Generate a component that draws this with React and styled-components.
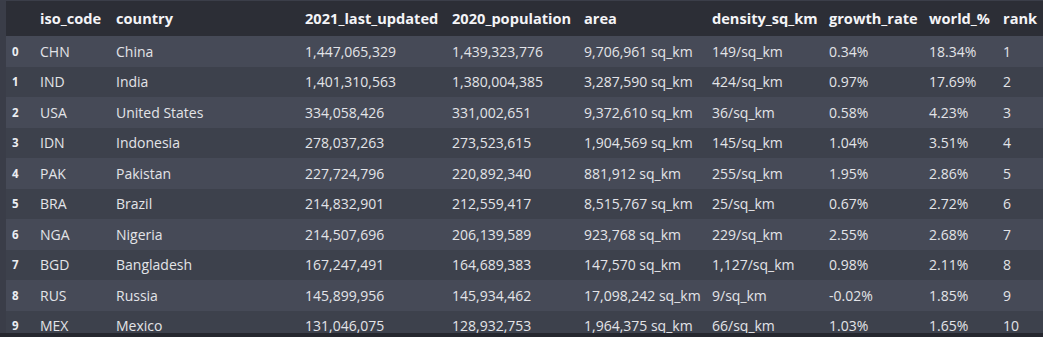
import React from 'react';
import styled, { createGlobalStyle } from 'styled-components';

const GlobalStyle = createGlobalStyle`
    html, body {
        margin: 0;
        padding: 0;
        background: #262830;
    }
    body {
        font-family: "Open Sans", "DejaVu Sans", sans-serif;
    }
`;

const COLUMNS = [
    { key: 'idx', label: '', width: 28 },
    { key: 'iso', label: 'iso_code', width: 76 },
    { key: 'country', label: 'country', width: 189 },
    { key: 'updated', label: '2021_last_updated', width: 147 },
    { key: 'pop', label: '2020_population', width: 132 },
    { key: 'area', label: 'area', width: 128 },
    { key: 'density', label: 'density_sq_km', width: 117 },
    { key: 'growth', label: 'growth_rate', width: 100 },
    { key: 'world', label: 'world_%', width: 74 },
    { key: 'rank', label: 'rank', width: 46 },
];

const ROWS = [
    ['CHN', 'China', '1,447,065,329', '1,439,323,776', '9,706,961 sq_km', '149/sq_km', '0.34%', '18.34%', '1'],
    ['IND', 'India', '1,401,310,563', '1,380,004,385', '3,287,590 sq_km', '424/sq_km', '0.97%', '17.69%', '2'],
    ['USA', 'United States', '334,058,426', '331,002,651', '9,372,610 sq_km', '36/sq_km', '0.58%', '4.23%', '3'],
    ['IDN', 'Indonesia', '278,037,263', '273,523,615', '1,904,569 sq_km', '145/sq_km', '1.04%', '3.51%', '4'],
    ['PAK', 'Pakistan', '227,724,796', '220,892,340', '881,912 sq_km', '255/sq_km', '1.95%', '2.86%', '5'],
    ['BRA', 'Brazil', '214,832,901', '212,559,417', '8,515,767 sq_km', '25/sq_km', '0.67%', '2.72%', '6'],
    ['NGA', 'Nigeria', '214,507,696', '206,139,589', '923,768 sq_km', '229/sq_km', '2.55%', '2.68%', '7'],
    ['BGD', 'Bangladesh', '167,247,491', '164,689,383', '147,570 sq_km', '1,127/sq_km', '0.98%', '2.11%', '8'],
    ['RUS', 'Russia', '145,899,956', '145,934,462', '17,098,242 sq_km', '9/sq_km', '-0.02%', '1.85%', '9'],
    ['MEX', 'Mexico', '131,046,075', '128,932,753', '1,964,375 sq_km', '66/sq_km', '1.03%', '1.65%', '10'],
];

const Frame = styled.div`
    position: relative;
    width: 1043px;
    height: 337px;
    overflow: hidden;
    box-sizing: border-box;
    background: #3a3d48;
    border-top: 1px solid #3b3e49;
    padding-left: 6px;
`;

const Table = styled.table`
    border-collapse: collapse;
    table-layout: fixed;
    width: 1037px;
    color: #e3e4e8;
    font-size: 14px;
`;

const HeadRow = styled.tr`
    height: 35px;
    background: #2c2e36;
`;

const HeadCell = styled.th`
    padding: 0 0 2px 6px;
    text-align: left;
    font-size: 14.6px;
    font-weight: 700;
    color: #f4f4f7;
    white-space: nowrap;
`;

const Row = styled.tr`
    height: 30.5px;
    background: ${props => props.striped ? '#3d414c' : '#464a57'};
`;

const Cell = styled.td`
    padding: 0 0 0 6px;
    white-space: nowrap;
`;

const IndexCell = styled.td`
    padding: 0 0 0 6px;
    font-size: 11.5px;
    font-weight: 700;
    color: #eceef2;
`;

const ScrollTrack = styled.div`
    position: absolute;
    left: 0;
    right: 0;
    bottom: 0;
    height: 4px;
    background: #25272e;
`;

export default function App() {
    return (
        <>
            <GlobalStyle />
            <Frame>
                <Table>
                    <colgroup>
                        {COLUMNS.map(col => <col key={col.key} style={{ width: col.width }} />)}
                    </colgroup>
                    <thead>
                        <HeadRow>
                            {COLUMNS.map(col => <HeadCell key={col.key}>{col.label}</HeadCell>)}
                        </HeadRow>
                    </thead>
                    <tbody>
                        {ROWS.map((row, i) => (
                            <Row key={row[0]} striped={i % 2 === 1}>
                                <IndexCell>{i}</IndexCell>
                                {row.map((value, j) => <Cell key={j}>{value}</Cell>)}
                            </Row>
                        ))}
                    </tbody>
                </Table>
                <ScrollTrack />
            </Frame>
        </>
    );
}
